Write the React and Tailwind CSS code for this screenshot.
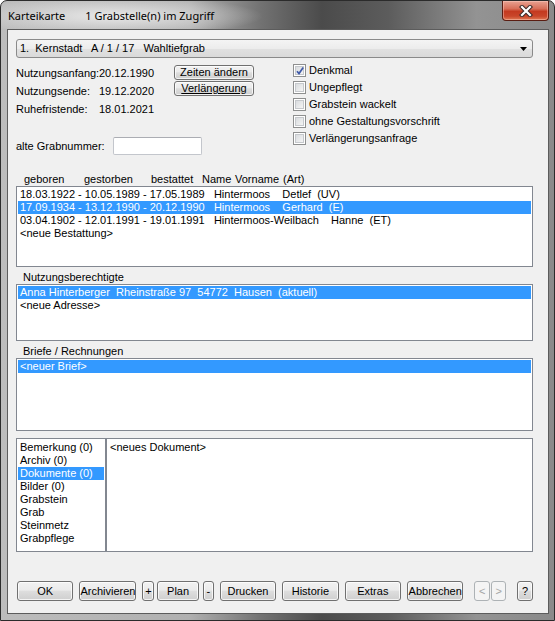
import React from 'react';

const btnFace =
    'border-[#707070] bg-[linear-gradient(#f2f2f2_0%,#ebebeb_45%,#dddddd_52%,#cfcfcf_100%)] text-black shadow-[inset_0_0_0_1px_rgba(255,255,255,0.75)]';

function WinButton({ children, className = '', disabled = false }) {
    return (
        <button
            className={`flex items-center justify-center rounded-[3px] border leading-none ${
                disabled
                    ? 'border-[#adb2b5] bg-[#f4f4f4] text-[#a5a5a5]'
                    : btnFace
            } ${className}`}
        >
            {children}
        </button>
    );
}

function Check({ checked = false, label }) {
    return (
        <div className="flex h-[17px] items-center">
            <div className="relative h-[13px] w-[13px] border border-[#8e8f8f] bg-white p-[1px]">
                <div className="h-full w-full border border-[#c5c8cc] bg-[linear-gradient(135deg,#d9dcdf_0%,#f4f4f4_100%)]" />
                {checked && (
                    <svg className="absolute left-[1px] top-[1px]" width="10" height="10" viewBox="0 0 10 10">
                        <path d="M2 5.2 L4 7.6 L8.2 1.6" fill="none" stroke="#3f5aa8" strokeWidth="1.7" />
                    </svg>
                )}
            </div>
            <span className="ml-[3px] whitespace-pre">{label}</span>
        </div>
    );
}

function Row({ children, selected = false }) {
    return (
        <div
            className={`h-[13px] whitespace-pre pl-[2px] leading-[13px] ${
                selected ? 'bg-[#3399ff] text-white' : ''
            }`}
        >
            {children}
        </div>
    );
}

const burials = [
    { text: '18.03.1922 - 10.05.1989 - 17.05.1989   Hintermoos    Detlef  (UV)' },
    { text: '17.09.1934 - 13.12.1990 - 20.12.1990   Hintermoos    Gerhard  (E)', selected: true },
    { text: '03.04.1902 - 12.01.1991 - 19.01.1991   Hintermoos-Weilbach    Hanne  (ET)' },
    { text: '<neue Bestattung>' },
];

const categories = [
    'Bemerkung (0)',
    'Archiv (0)',
    'Dokumente (0)',
    'Bilder (0)',
    'Grabstein',
    'Grab',
    'Steinmetz',
    'Grabpflege',
];

export default function App() {
    return (
        <div className="h-[621px] w-[555px] font-['Liberation_Sans',Arial,sans-serif] text-[11px] text-black">
            <div className="flex h-full w-full flex-col rounded-t-[7px] border border-[#2b2b2b] bg-[linear-gradient(90deg,#bcbcbc_0%,#b0b0b0_34%,#727272_47%,#4b4b4b_58%,#5c5c5c_70%,#939393_86%,#8a8a8a_100%)]">
                {/* title bar */}
                <div className="flex h-[28px] justify-between bg-[radial-gradient(ellipse_150px_20px_at_112px_15px,rgba(235,235,235,0.95),rgba(220,220,220,0))]">
                    <div className="flex items-center pl-[7px] pt-[2px] font-['Noto_Sans',sans-serif] text-[11px] text-black">
                        <span>Karteikarte</span>
                        <span className="ml-[20px]">1 Grabstelle(n) im Zugriff</span>
                    </div>
                    <div className="mr-[5px] flex h-[20px] w-[47px] items-center justify-center rounded-b-[4px] border border-t-0 border-[#5a1d12] bg-[linear-gradient(#e8a292_0%,#d8705a_40%,#c43a20_55%,#c9462a_80%,#e07a55_100%)] shadow-[inset_0_0_0_1px_rgba(255,210,200,0.45)]">
                        <svg width="14" height="12" viewBox="0 0 14 12">
                            <path d="M3 2 L11 10 M11 2 L3 10" stroke="#3a2a28" strokeWidth="4.2" strokeLinecap="square" />
                            <path d="M3 2 L11 10 M11 2 L3 10" stroke="#ffffff" strokeWidth="2.2" strokeLinecap="square" />
                        </svg>
                    </div>
                </div>

                {/* client area */}
                <div className="ml-[6px] h-[585px] w-[542px] border border-[#5c5c5c] bg-[#f0f0f0]">
                    <div className="ml-[8px] flex w-[517px] flex-col">
                        {/* combo */}
                        <div className="mt-[9px] flex h-[19px] items-center justify-between rounded-[3px] border border-[#8a8a8a] bg-[linear-gradient(#f4f4f4_0%,#ececec_50%,#e1e1e1_51%,#dadada_100%)] pl-[3px] pr-[5px]">
                            <span className="whitespace-pre">1.  Kernstadt   A / 1 / 17   Wahltiefgrab</span>
                            <svg width="7" height="4" viewBox="0 0 7 4">
                                <path d="M0 0 H7 L3.5 4 Z" fill="#000" />
                            </svg>
                        </div>

                        {/* info block */}
                        <div className="mt-[4px] flex h-[93px]">
                            <div className="flex w-[277px] flex-col">
                                <div className="flex">
                                    <div className="mt-[2px] grid w-[158px] grid-cols-[83px_75px] leading-[18px]">
                                        <span>Nutzungsanfang:</span>
                                        <span>20.12.1990</span>
                                        <span>Nutzungsende:</span>
                                        <span>19.12.2020</span>
                                        <span>Ruhefristende:</span>
                                        <span>18.01.2021</span>
                                    </div>
                                    <div className="mt-[3px] flex flex-col gap-[1px]">
                                        <WinButton className="h-[15px] w-[80px]">Zeiten ändern</WinButton>
                                        <WinButton className="h-[15px] w-[80px]">
                                            <span className="underline">Verlängerung</span>
                                        </WinButton>
                                    </div>
                                </div>
                                <div className="mt-[19px] flex items-center">
                                    <span className="w-[97px]">alte Grabnummer:</span>
                                    <div className="h-[18px] w-[89px] rounded-[2px] border border-[#c3c6cc] border-t-[#abadb3] bg-white" />
                                </div>
                            </div>
                            <div className="flex flex-col">
                                <Check checked label="Denkmal" />
                                <Check label="Ungepflegt" />
                                <Check label="Grabstein wackelt" />
                                <Check label="ohne Gestaltungsvorschrift" />
                                <Check label="Verlängerungsanfrage" />
                            </div>
                        </div>

                        {/* column header */}
                        <div className="mt-[18px] flex h-[13px] pl-[8px] leading-[13px]">
                            <span className="w-[60px]">geboren</span>
                            <span className="w-[67px]">gestorben</span>
                            <span className="w-[51px]">bestattet</span>
                            <span className="w-[33px]">Name</span>
                            <span className="w-[48px]">Vorname</span>
                            <span>(Art)</span>
                        </div>

                        <div className="h-[81px] border border-[#828790] bg-white p-[1px]">
                            {burials.map((b) => (
                                <Row key={b.text} selected={b.selected}>
                                    {b.text}
                                </Row>
                            ))}
                        </div>

                        <div className="mt-[4px] h-[13px] pl-[7px] leading-[13px]">Nutzungsberechtigte</div>
                        <div className="h-[57px] border border-[#828790] bg-white p-[1px]">
                            <Row selected>Anna Hinterberger  Rheinstraße 97  54772  Hausen  (aktuell)</Row>
                            <Row>{'<neue Adresse>'}</Row>
                        </div>

                        <div className="mt-[4px] h-[13px] pl-[7px] leading-[13px]">Briefe / Rechnungen</div>
                        <div className="h-[73px] border border-[#828790] bg-white p-[1px]">
                            <Row selected>{'<neuer Brief>'}</Row>
                        </div>

                        {/* bottom lists */}
                        <div className="mt-[7px] flex h-[114px]">
                            <div className="w-[90px] border border-[#828790] bg-white px-[1px] pt-[2px]">
                                {categories.map((c) => (
                                    <Row key={c} selected={c === 'Dokumente (0)'}>
                                        {c}
                                    </Row>
                                ))}
                            </div>
                            <div className="flex-1 border border-[#828790] bg-white px-[1px] pt-[2px]">
                                <Row>{'<neues Dokument>'}</Row>
                            </div>
                        </div>

                        {/* buttons */}
                        <div className="mt-[29px] flex h-[20px] pl-[1px]">
                            <WinButton className="w-[57px]">OK</WinButton>
                            <WinButton className="ml-[6px] w-[57px]">Archivieren</WinButton>
                            <WinButton className="ml-[6px] w-[12px]">+</WinButton>
                            <WinButton className="ml-[3px] w-[42px]">Plan</WinButton>
                            <WinButton className="ml-[4px] w-[11px]">-</WinButton>
                            <WinButton className="ml-[6px] w-[57px]">Drucken</WinButton>
                            <WinButton className="ml-[6px] w-[57px]">Historie</WinButton>
                            <WinButton className="ml-[6px] w-[57px]">Extras</WinButton>
                            <WinButton className="ml-[6px] w-[57px]">Abbrechen</WinButton>
                            <WinButton disabled className="ml-[11px] w-[16px]">&lt;</WinButton>
                            <WinButton disabled className="ml-[1px] w-[15px]">&gt;</WinButton>
                            <WinButton className="ml-[11px] w-[16px]">?</WinButton>
                        </div>
                    </div>
                </div>
            </div>
        </div>
    );
}
